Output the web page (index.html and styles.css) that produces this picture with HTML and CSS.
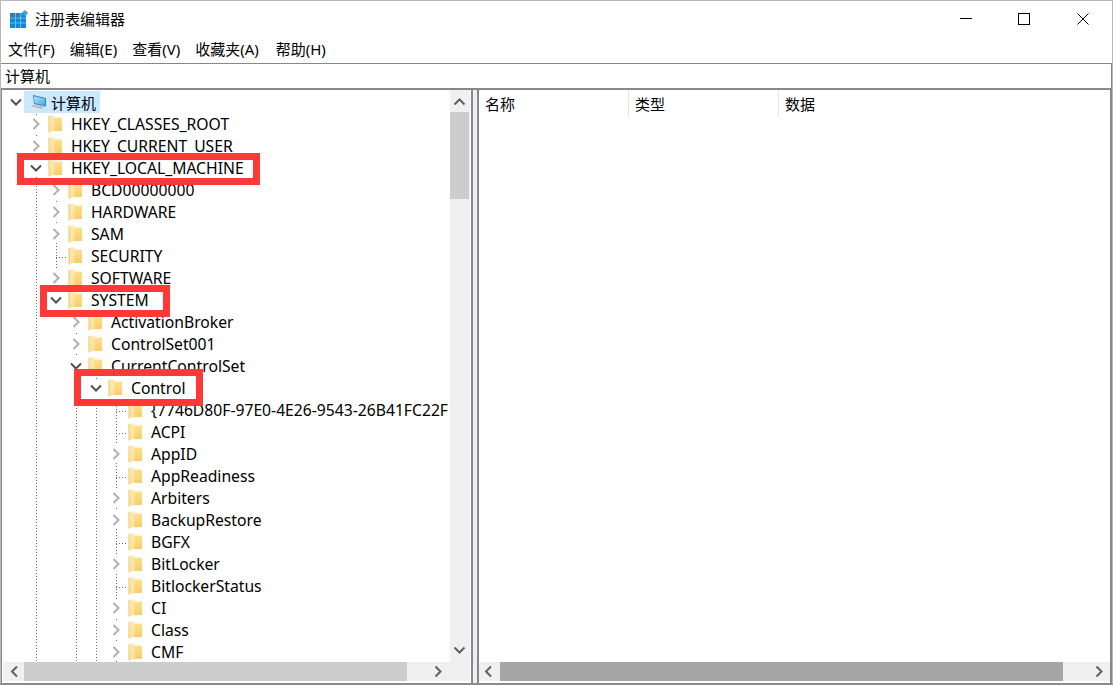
FILE: index.html
```html
<!DOCTYPE html>
<html lang="zh-CN">
<head>
<meta charset="utf-8">
<title>注册表编辑器</title>
<link rel="stylesheet" href="styles.css">
</head>
<body>
<svg class="defs" width="0" height="0">
  <defs>
    <linearGradient id="fold" x1="0" y1="0" x2="0" y2="1">
      <stop offset="0" stop-color="#ffe08a"/>
      <stop offset="1" stop-color="#f8cd6c"/>
    </linearGradient>
    <linearGradient id="flap" x1="0" y1="0" x2="0" y2="1">
      <stop offset="0" stop-color="#fdeab0"/>
      <stop offset="1" stop-color="#fbe09a"/>
    </linearGradient>
    <linearGradient id="screen" x1="0" y1="0" x2="1" y2="1">
      <stop offset="0" stop-color="#b8e2f8"/>
      <stop offset="1" stop-color="#4aa6e2"/>
    </linearGradient>
    <g id="right"><path d="M5.500 4l5 5-5 5" stroke="#b0b0b0" stroke-width="2" fill="none"/></g>
    <g id="down"><path d="M3 6.500l5 5 5-5" stroke="#505050" stroke-width="2" fill="none"/></g>
    <g id="fd">
      <path d="M6 2.500h8v13.500h-8z" fill="url(#fold)"/>
      <path d="M1 1l1-.5h4.500v15l-5.500 2z" fill="url(#flap)"/>
      <path d="M1 1v16.500" stroke="#e6c878" stroke-width="1"/>
    </g>
  </defs>
</svg>
<div class="window">
  <header class="titlebar">
    <svg class="app-icon" width="18" height="18" viewBox="0 0 18 18">
      <rect x="0" y="3" width="16" height="15" fill="#0a8ad8"/>
      <rect x="0" y="3" width="11" height="5" fill="#2c7fb4"/>
      <path d="M5.500 3v15M10.500 3v15M0 8h16M0 13h16" stroke="#6cbcec" stroke-width="1"/>
      <path d="M15 0l3 3-3 3.500-3.500-3.500z" fill="#3aa0dc"/>
    </svg>
    <span class="title">注册表编辑器</span>
    <div class="controls">
      <svg class="ctl" width="12" height="12" viewBox="0 0 12 12"><path d="M0 5.500h12" stroke="#000" fill="none"/></svg>
      <svg class="ctl" width="12" height="12" viewBox="0 0 12 12"><rect x="0.500" y="0.500" width="11" height="11" stroke="#000" fill="none"/></svg>
      <svg class="ctl ctl-close" width="12" height="12" viewBox="0 0 12 12"><path d="M0.500 0.500l11 11M11.500 0.500l-11 11" stroke="#000" fill="none"/></svg>
    </div>
  </header>
  <nav class="menubar">
    <span>文件(F)</span><span>编辑(E)</span><span>查看(V)</span><span>收藏夹(A)</span><span class="menu-last">帮助(H)</span>
  </nav>
  <div class="address">计算机</div>
  <main class="panes">
    <section class="tree-pane">
      <div class="tree-view">
        <div class="tree">
          <i class="guide g36"></i><i class="guide g56"></i><i class="guide g76"></i><i class="guide g96"></i><i class="guide g116"></i>
          <i class="tick t1"></i><i class="tick t2"></i><i class="tick t3"></i><i class="tick t4"></i><i class="tick t5"></i><i class="tick t6"></i>
          <div class="row l0"><svg class="chev" viewBox="0 0 16 18"><use href="#down"/></svg>
            <span class="root-sel"><svg class="pc" width="20" height="18" viewBox="0 0 20 18"><path d="M7 2l13 3v8.500l-12-2.500z" fill="#2f86c8"/><path d="M8 3.200l11 2.600v6.400l-10.500-2z" fill="url(#screen)"/><path d="M8 11.500l11 2.500-5 2-10-2z" fill="#b5c0ca"/><path d="M1 15l4-1.500 8 2-4 2z" fill="#e2e6ea"/></svg><span class="root-label">计算机</span></span></div>
          <div class="row l1"><svg class="chev" viewBox="0 0 16 18"><use href="#right"/></svg><svg class="folder" viewBox="0 0 14 18"><use href="#fd"/></svg><span>HKEY_CLASSES_ROOT</span></div>
          <div class="row l1"><svg class="chev" viewBox="0 0 16 18"><use href="#right"/></svg><svg class="folder" viewBox="0 0 14 18"><use href="#fd"/></svg><span>HKEY_CURRENT_USER</span></div>
          <div class="row l1"><svg class="chev" viewBox="0 0 16 18"><use href="#down"/></svg><svg class="folder" viewBox="0 0 14 18"><use href="#fd"/></svg><span>HKEY_LOCAL_MACHINE</span></div>
          <div class="row l2"><svg class="chev" viewBox="0 0 16 18"><use href="#right"/></svg><svg class="folder" viewBox="0 0 14 18"><use href="#fd"/></svg><span>BCD00000000</span></div>
          <div class="row l2"><svg class="chev" viewBox="0 0 16 18"><use href="#right"/></svg><svg class="folder" viewBox="0 0 14 18"><use href="#fd"/></svg><span>HARDWARE</span></div>
          <div class="row l2"><svg class="chev" viewBox="0 0 16 18"><use href="#right"/></svg><svg class="folder" viewBox="0 0 14 18"><use href="#fd"/></svg><span>SAM</span></div>
          <div class="row l2"><span class="leaf"></span><svg class="folder" viewBox="0 0 14 18"><use href="#fd"/></svg><span>SECURITY</span></div>
          <div class="row l2"><svg class="chev" viewBox="0 0 16 18"><use href="#right"/></svg><svg class="folder" viewBox="0 0 14 18"><use href="#fd"/></svg><span>SOFTWARE</span></div>
          <div class="row l2"><svg class="chev" viewBox="0 0 16 18"><use href="#down"/></svg><svg class="folder" viewBox="0 0 14 18"><use href="#fd"/></svg><span>SYSTEM</span></div>
          <div class="row l3"><svg class="chev" viewBox="0 0 16 18"><use href="#right"/></svg><svg class="folder" viewBox="0 0 14 18"><use href="#fd"/></svg><span>ActivationBroker</span></div>
          <div class="row l3"><svg class="chev" viewBox="0 0 16 18"><use href="#right"/></svg><svg class="folder" viewBox="0 0 14 18"><use href="#fd"/></svg><span>ControlSet001</span></div>
          <div class="row l3"><svg class="chev" viewBox="0 0 16 18"><use href="#down"/></svg><svg class="folder" viewBox="0 0 14 18"><use href="#fd"/></svg><span>CurrentControlSet</span></div>
          <div class="row l4"><svg class="chev" viewBox="0 0 16 18"><use href="#down"/></svg><svg class="folder" viewBox="0 0 14 18"><use href="#fd"/></svg><span>Control</span></div>
          <div class="row l5"><span class="leaf"></span><svg class="folder" viewBox="0 0 14 18"><use href="#fd"/></svg><span>{7746D80F-97E0-4E26-9543-26B41FC22F</span></div>
          <div class="row l5"><span class="leaf"></span><svg class="folder" viewBox="0 0 14 18"><use href="#fd"/></svg><span>ACPI</span></div>
          <div class="row l5"><svg class="chev" viewBox="0 0 16 18"><use href="#right"/></svg><svg class="folder" viewBox="0 0 14 18"><use href="#fd"/></svg><span>AppID</span></div>
          <div class="row l5"><span class="leaf"></span><svg class="folder" viewBox="0 0 14 18"><use href="#fd"/></svg><span>AppReadiness</span></div>
          <div class="row l5"><svg class="chev" viewBox="0 0 16 18"><use href="#right"/></svg><svg class="folder" viewBox="0 0 14 18"><use href="#fd"/></svg><span>Arbiters</span></div>
          <div class="row l5"><svg class="chev" viewBox="0 0 16 18"><use href="#right"/></svg><svg class="folder" viewBox="0 0 14 18"><use href="#fd"/></svg><span>BackupRestore</span></div>
          <div class="row l5"><span class="leaf"></span><svg class="folder" viewBox="0 0 14 18"><use href="#fd"/></svg><span>BGFX</span></div>
          <div class="row l5"><svg class="chev" viewBox="0 0 16 18"><use href="#right"/></svg><svg class="folder" viewBox="0 0 14 18"><use href="#fd"/></svg><span>BitLocker</span></div>
          <div class="row l5"><span class="leaf"></span><svg class="folder" viewBox="0 0 14 18"><use href="#fd"/></svg><span>BitlockerStatus</span></div>
          <div class="row l5"><svg class="chev" viewBox="0 0 16 18"><use href="#right"/></svg><svg class="folder" viewBox="0 0 14 18"><use href="#fd"/></svg><span>CI</span></div>
          <div class="row l5"><svg class="chev" viewBox="0 0 16 18"><use href="#right"/></svg><svg class="folder" viewBox="0 0 14 18"><use href="#fd"/></svg><span>Class</span></div>
          <div class="row l5"><svg class="chev" viewBox="0 0 16 18"><use href="#right"/></svg><svg class="folder" viewBox="0 0 14 18"><use href="#fd"/></svg><span>CMF</span></div>
          <b class="mark m1"></b><b class="mark m2"></b><b class="mark m3"></b>
        </div>
        <div class="vscroll">
          <svg class="sb-btn" viewBox="0 0 19 22"><path d="M4.500 14.500l5-5 5 5" stroke="#606060" stroke-width="2" fill="none"/></svg>
          <div class="v-track"><div class="v-thumb"></div></div>
          <svg class="sb-btn sb-btn-down" viewBox="0 0 19 22"><path d="M4.500 8.500l5 5 5-5" stroke="#606060" stroke-width="2" fill="none"/></svg>
        </div>
      </div>
      <div class="hscroll hscroll-tree">
        <svg class="sb-start" viewBox="0 0 21 19"><path d="M14 4.500l-5 5 5 5" stroke="#606060" stroke-width="2" fill="none"/></svg>
        <div class="h-track"><div class="h-thumb h-thumb-left"></div></div>
        <svg class="sb-end-tree" viewBox="0 0 46 19"><path d="M11.500 4.500l5 5-5 5" stroke="#606060" stroke-width="2" fill="none"/></svg>
      </div>
    </section>
    <section class="list-pane">
      <div class="list-head">
        <span class="col c1">名称</span><span class="col c2">类型</span><span class="col c3">数据</span>
      </div>
      <div class="list-body"></div>
      <div class="hscroll">
        <svg class="sb-start" viewBox="0 0 21 19"><path d="M12 4.500l-5 5 5 5" stroke="#606060" stroke-width="2" fill="none"/></svg>
        <div class="h-track"><div class="h-thumb h-thumb-right"></div></div>
        <svg class="sb-end-list" viewBox="0 0 47 19"><path d="M33.500 4.500l5 5-5 5" stroke="#606060" stroke-width="2" fill="none"/></svg>
      </div>
    </section>
  </main>
</div>
</body>
</html>
```
FILE: styles.css
```css
* { box-sizing: border-box; }
html, body { margin: 0; padding: 0; height: 100%; background: #fff; }
body { font-family: "Noto Sans", "Noto Sans CJK SC", sans-serif; font-size: 15.7px; color: #000; overflow: hidden; }
.defs { position: absolute; }
.window { width: 1113px; height: 685px; display: flex; flex-direction: column; border: 1px solid #b8b8b8; border-bottom: 2px solid #8a8a8f; }
.titlebar { height: 36px; flex: none; display: flex; align-items: center; padding-left: 9px; }
.app-icon { flex: none; }
.title { margin-left: 7px; padding-bottom: 2px; font-size: 15px; font-family: "Noto Sans CJK SC", sans-serif; }
.controls { margin-left: auto; display: flex; gap: 46px; padding-right: 23px; }
.ctl { display: block; }
.ctl-close { margin-left: 1px; }
.menubar { height: 26px; flex: none; display: flex; gap: 15px; padding: 0 0 3px 7px; align-items: center; font-size: 15px; background: #fff; }
.menu-last { margin-left: 2px; }
.address { height: 27px; flex: none; border: 1px solid #88888c; border-bottom-width: 2px; border-left: 0; padding: 0 0 2px 4px; display: flex; align-items: center; font-size: 15px; background: #fff; }
.panes { flex: 1; min-height: 0; display: flex; background: #efefef; }
.tree-pane { width: 472px; flex: none; display: flex; flex-direction: column; background: #fff; border-left: 1px solid #88888c; border-right: 2px solid #88888c; }
.tree-view { flex: 1; min-height: 0; display: flex; }
.tree { flex: 1; min-width: 0; position: relative; overflow: hidden; padding-top: 1px; }
.row { height: 22px; display: flex; align-items: center; white-space: nowrap; }
.l0 { padding-left: 6px; }
.l1 { padding-left: 26px; }
.l2 { padding-left: 46px; }
.l3 { padding-left: 66px; }
.l4 { padding-left: 86px; }
.l5 { padding-left: 106px; }
.chev { width: 16px; height: 18px; flex: none; display: block; position: relative; background: #fff; }
.leaf { width: 16px; height: 18px; flex: none; }
.folder { width: 14px; height: 18px; margin-left: 4px; margin-right: 9px; flex: none; position: relative; }
.root-sel { display: flex; align-items: center; height: 22px; background: #cce8ff; padding: 0 4px 0 2px; position: relative; }
.pc { flex: none; }
.root-label { margin-left: 5px; font-size: 15px; font-family: "Noto Sans CJK SC", sans-serif; }
.row > span:last-child { position: relative; }
.guide { position: absolute; width: 1px; background: repeating-linear-gradient(to bottom, #707070 0 1px, transparent 1px 3px); }
.g36 { left: 34px; top: 24px; bottom: 0; }
.g56 { left: 54px; top: 90px; height: 124px; }
.g76 { left: 74px; top: 222px; bottom: 0; }
.g96 { left: 94px; top: 288px; bottom: 0; }
.g116 { left: 114px; top: 310px; bottom: 0; }
.tick { position: absolute; height: 1px; width: 10px; background: repeating-linear-gradient(to right, #707070 0 1px, transparent 1px 3px); }
.t1 { left: 54px; top: 167px; }
.t2 { left: 114px; top: 321px; }
.t3 { left: 114px; top: 343px; }
.t4 { left: 114px; top: 387px; }
.t5 { left: 114px; top: 453px; }
.t6 { left: 114px; top: 497px; }
.mark { position: absolute; border: 7px solid #ff3838; }
.m1 { left: 15px; top: 63px; width: 243px; height: 32px; }
.m2 { left: 38px; top: 195px; width: 130px; height: 32px; }
.m3 { left: 72px; top: 279px; width: 129px; height: 37px; }
.vscroll { width: 20px; margin-right: 1px; flex: none; background: #f0f0f0; display: flex; flex-direction: column; }
.sb-btn { width: 19px; height: 22px; flex: none; display: block; }
.sb-btn-down { margin-bottom: 1px; }
.v-track { flex: 1; }
.v-thumb { width: 19px; height: 87px; background: #cdcdcd; }
.hscroll { height: 19px; flex: none; display: flex; background: #f0f0f0; margin-bottom: 2px; }
.hscroll-tree { margin-left: 1px; margin-right: 1px; }
.sb-start { width: 21px; height: 19px; flex: none; display: block; }
.sb-end-tree { width: 46px; height: 19px; flex: none; display: block; }
.sb-end-list { width: 47px; height: 19px; flex: none; display: block; }
.h-track { flex: 1; min-width: 0; }
.h-thumb { height: 19px; }
.h-thumb-left { width: 383px; background: #cdcdcd; }
.h-thumb-right { width: 563px; background: #a6a6a6; }
.list-pane { flex: 1; min-width: 0; margin-left: 4px; display: flex; flex-direction: column; background: #fff; border-left: 2px solid #88888c; border-right: 2px solid #88888c; }
.list-head { height: 27px; flex: none; display: flex; font-size: 15px; }
.col { display: flex; align-items: center; padding-left: 6px; border-right: 1px solid #e5e5e5; height: 27px; font-family: "Noto Sans CJK SC", sans-serif; }
.c1 { width: 150px; }
.c2 { width: 150px; }
.c3 { border-right: 0; }
.list-body { flex: 1; }
```
